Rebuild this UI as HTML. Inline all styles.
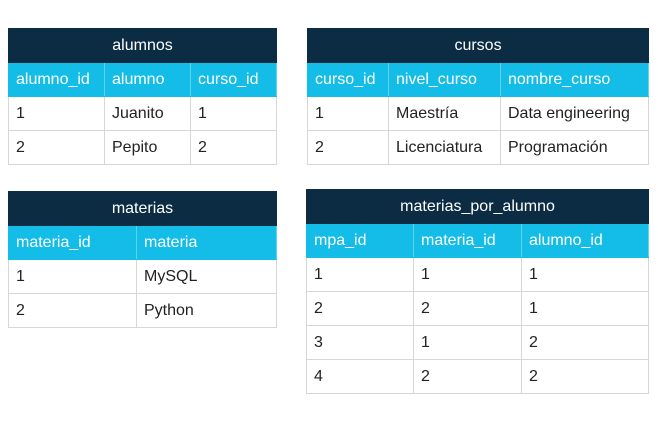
<!DOCTYPE html>
<html><head><style>
body{margin:0;width:658px;height:430px;background:#fff;position:relative;overflow:hidden;font-family:"Liberation Sans",sans-serif;}
table{position:absolute;border-collapse:collapse;table-layout:fixed;font-size:16px;}
td,th{border:1px solid #d6d6d6;padding:0 0 0 7px;text-align:left;color:#222;height:33px;white-space:nowrap;overflow:hidden;}
th.t{background:#0c2c43;color:#fff;text-align:center;font-weight:normal;padding:0;border-color:#0c2c43;height:33px;}
th.h{background:#14bde8;color:#fff;font-weight:normal;border-color:#14bde8;border-right:1px solid #5fd3ee;}
</style></head><body>
<table style="left:8px;top:28px;width:268px">
<colgroup><col style="width:96px"><col style="width:86px"><col style="width:86px"></colgroup>
<tr><th class="t" colspan="3">alumnos</th></tr>
<tr><th class="h">alumno_id</th><th class="h">alumno</th><th class="h">curso_id</th></tr>
<tr><td>1</td><td>Juanito</td><td>1</td></tr>
<tr><td>2</td><td>Pepito</td><td>2</td></tr>
</table>
<table style="left:307px;top:28px;width:341px">
<colgroup><col style="width:81px"><col style="width:112px"><col style="width:148px"></colgroup>
<tr><th class="t" colspan="3">cursos</th></tr>
<tr><th class="h">curso_id</th><th class="h">nivel_curso</th><th class="h">nombre_curso</th></tr>
<tr><td>1</td><td>Maestría</td><td>Data engineering</td></tr>
<tr><td>2</td><td>Licenciatura</td><td>Programación</td></tr>
</table>
<table style="left:8px;top:191px;width:268px">
<colgroup><col style="width:128px"><col style="width:140px"></colgroup>
<tr><th class="t" colspan="2">materias</th></tr>
<tr><th class="h">materia_id</th><th class="h">materia</th></tr>
<tr><td>1</td><td>MySQL</td></tr>
<tr><td>2</td><td>Python</td></tr>
</table>
<table style="left:306px;top:189px;width:342px">
<colgroup><col style="width:107px"><col style="width:108px"><col style="width:127px"></colgroup>
<tr><th class="t" colspan="3">materias_por_alumno</th></tr>
<tr><th class="h">mpa_id</th><th class="h">materia_id</th><th class="h">alumno_id</th></tr>
<tr><td>1</td><td>1</td><td>1</td></tr>
<tr><td>2</td><td>2</td><td>1</td></tr>
<tr><td>3</td><td>1</td><td>2</td></tr>
<tr><td>4</td><td>2</td><td>2</td></tr>
</table>
</body></html>
